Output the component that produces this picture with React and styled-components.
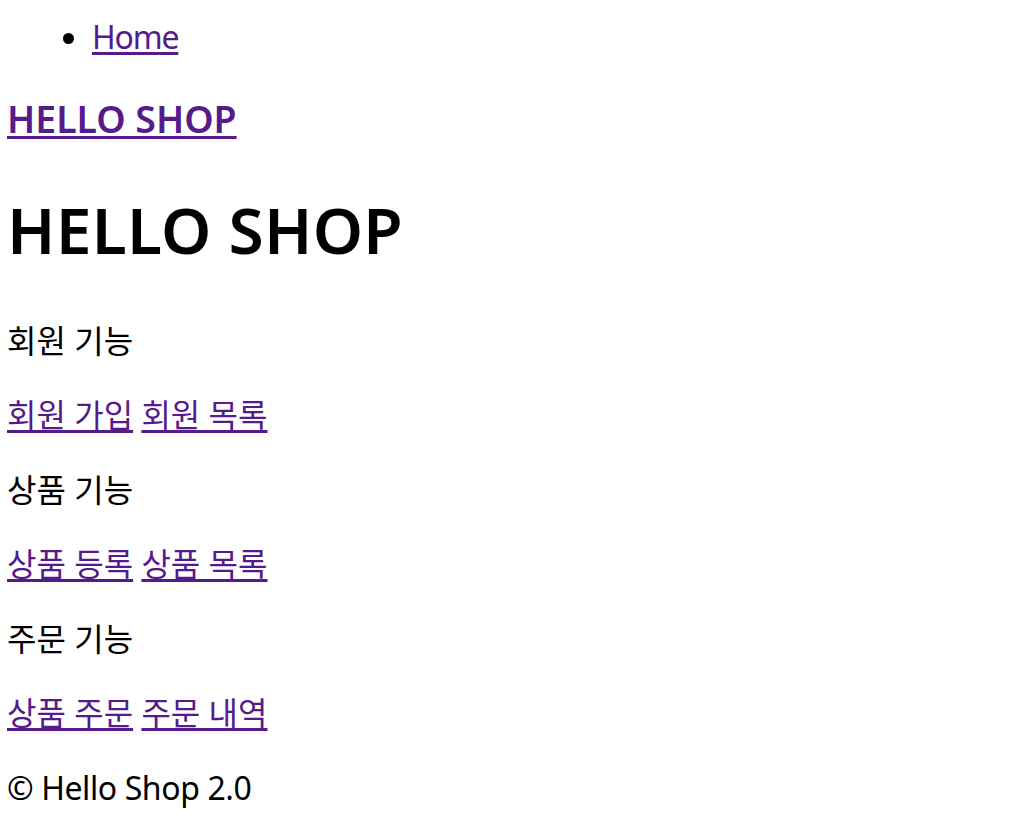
import React from 'react'
import styled, { createGlobalStyle } from 'styled-components';

const GlobalStyle = createGlobalStyle`
html, body {
  margin: 0;
  padding: 0;
  background: #ffffff;
}
body {
  font-family: "Noto Sans", "Noto Sans CJK KR", sans-serif;
  font-size: 32px;
  line-height: 1.33;
  color: #000000;
}
`;

function App() {
  return (
    <>
    <GlobalStyle/>
    <Page>
      <Header>
        <NavList>
          <NavItem><Link href="#">Home</Link></NavItem>
        </NavList>
        <Brand><Link href="#">HELLO SHOP</Link></Brand>
      </Header>
      <Title>HELLO SHOP</Title>
      <Section>
        <Label>회원 기능</Label>
        <Links><Link href="#">회원 가입</Link> <Link href="#">회원 목록</Link></Links>
      </Section>
      <Section>
        <Label>상품 기능</Label>
        <Links><Link href="#">상품 등록</Link> <Link href="#">상품 목록</Link></Links>
      </Section>
      <Section>
        <Label>주문 기능</Label>
        <Links><Link href="#">상품 주문</Link> <Link href="#">주문 내역</Link></Links>
      </Section>
      <Footer>© Hello Shop 2.0</Footer>
    </Page>
    </>
  )
}

export default App

const Page = styled.div`
padding: 0 8px 0 7px;
`;

const Header = styled.header`
display: flex;
flex-direction: column;
`;

const NavList = styled.ul`
margin: 16px 0 0;
padding-left: 85px;
list-style: disc;
`;

const NavItem = styled.li`
line-height: 42.5px;
letter-spacing: -1.2px;
`;

const Link = styled.a`
color: #551a8b;
text-decoration: underline;
text-underline-offset: 3px;
`;

const Brand = styled.h3`
font-size: 37.4px;
font-weight: 600;
line-height: 50px;
margin: 35px 0 43px;
`;

const Title = styled.h1`
font-size: 64px;
font-weight: 600;
line-height: 85px;
margin: 0 0 48px;
letter-spacing: 0.3px;
`;

const Section = styled.section`
display: flex;
flex-direction: column;
`;

const Label = styled.p`
margin: 0 0 32px;
line-height: 42.5px;
`;

const Links = styled.p`
margin: 0 0 32px;
line-height: 42.5px;
`;

const Footer = styled.p`
margin: 0;
line-height: 42.5px;
letter-spacing: -0.4px;
`;
